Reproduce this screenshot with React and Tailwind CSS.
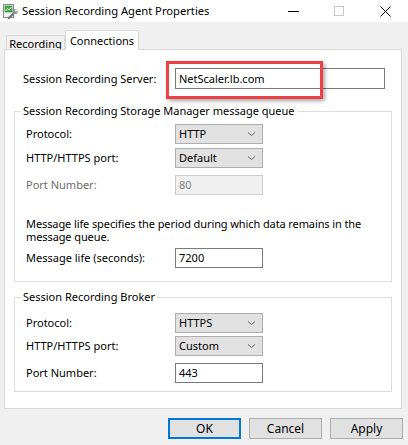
import React from "react";

const font = { fontFamily: '"Noto Sans", "Liberation Sans", sans-serif' };

function Chevron() {
  return (
    <svg width="9" height="6" viewBox="0 0 9 6" className="shrink-0">
      <path d="M1 1.5 L4.5 4.5 L8 1.5" fill="none" stroke="#606060" strokeWidth="1" />
    </svg>
  );
}

function Select({ value }) {
  return (
    <div className="flex h-[20px] w-[88px] items-center justify-between border border-[#adadad] bg-[#e1e1e1] pl-[3px] pr-[6px] text-black">
      <span>{value}</span>
      <Chevron />
    </div>
  );
}

function TextBox({ value, disabled }) {
  return (
    <div
      className={
        "flex h-[20px] w-[88px] items-center pl-[3px] " +
        (disabled
          ? "border border-[#cccccc] bg-[#f0f0f0] text-[#838383]"
          : "border border-[#7a7a7a] bg-white text-black")
      }
    >
      {value}
    </div>
  );
}

function Row({ label, children, dim }) {
  return (
    <div className="flex items-center">
      <span className={"w-[149px] shrink-0 " + (dim ? "text-[#6d6d6d]" : "text-black")}>{label}</span>
      {children}
    </div>
  );
}

function Button({ label, primary }) {
  return (
    <div
      className={
        "flex h-[21px] w-[73px] items-center justify-center bg-[#e1e1e1] text-[12px] text-black " +
        (primary ? "border-2 border-[#0078d7]" : "border border-[#adadad]")
      }
    >
      {label}
    </div>
  );
}

function AppIcon() {
  return (
    <svg width="16" height="16" viewBox="0 0 16 16">
      <rect x="1.5" y="1.5" width="10" height="13" fill="#f4f4f4" stroke="#8a8a8a" />
      <rect x="3" y="3" width="7" height="6" fill="#3fae49" stroke="#2a7d33" strokeWidth="0.6" />
      <path d="M3.5 8 L5.5 5.5 L7 7 L9.5 4" fill="none" stroke="#ffffff" strokeWidth="0.9" />
      <path d="M7 15 L13 9" stroke="#6f7780" strokeWidth="2.4" strokeLinecap="round" />
      <circle cx="13" cy="8.5" r="2.6" fill="#8c949c" />
      <circle cx="14" cy="7.5" r="1.1" fill="#f4f4f4" />
    </svg>
  );
}

export default function App() {
  return (
    <div className="relative h-[445px] w-[408px] overflow-hidden bg-[#f0f0f0] text-[11px] leading-[16px]" style={font}>
      {/* Title bar */}
      <div className="flex h-[22px] items-center bg-white">
        <div className="ml-[2px] flex h-[16px] w-[16px] items-center">
          <AppIcon />
        </div>
        <span className="ml-[4px] text-[11.2px] text-black">Session Recording Agent Properties</span>
        <div className="ml-auto flex items-center">
          <div className="flex h-[22px] w-[46px] items-center justify-center">
            <div className="h-px w-[11px] bg-black" />
          </div>
          <div className="flex h-[22px] w-[46px] items-center justify-center">
            <div className="h-[10px] w-[10px] border border-[#c8c8c8]" />
          </div>
          <div className="flex h-[22px] w-[46px] items-center justify-center">
            <svg width="11" height="11" viewBox="0 0 11 11">
              <path d="M0.5 0.5 L10.5 10.5 M10.5 0.5 L0.5 10.5" stroke="#000" strokeWidth="1" />
            </svg>
          </div>
        </div>
      </div>

      {/* Tabs */}
      <div className="flex h-[27px] items-end pl-[6px] pt-[8px]">
        <div className="mb-[-1px] flex h-[15px] w-[59px] items-center justify-center border border-b-0 border-[#d9d9d9] bg-[#f0f0f0] pt-[1px] leading-[13px] text-black">
          Recording
        </div>
        <div className="relative z-10 mb-[-1px] flex h-[20px] w-[74px] items-start justify-center border border-b-0 border-[#d9d9d9] bg-white pt-[2px] text-black">
          Connections
        </div>
      </div>

      {/* Tab page */}
      <div className="relative mx-[4px] h-[360px] w-[398px] border border-[#d9d9d9] bg-white">
        <div className="flex items-center pl-[18px] pt-[18px]">
          <span className="w-[152px] shrink-0 text-black">Session Recording Server:</span>
          <div className="flex h-[21px] w-[210px] items-center border border-[#7a7a7a] bg-white pl-[3px] text-black">
            NetScaler.lb.com
          </div>
        </div>

        <fieldset className="mx-[9px] mt-[14px] border border-[#dcdcdc] px-[6px] pb-[13px]">
          <legend className="px-[2px] text-black">Session Recording Storage Manager message queue</legend>
          <div className="flex flex-col pl-[5px] pt-[5px]">
            <Row label="Protocol:">
              <Select value="HTTP" />
            </Row>
            <div className="mt-[4px]">
              <Row label="HTTP/HTTPS port:">
                <Select value="Default" />
              </Row>
            </div>
            <div className="mt-[7px]">
              <Row label="Port Number:" dim>
                <TextBox value="80" disabled />
              </Row>
            </div>
            <p className="mt-[22px] w-[358px] tracking-[-0.1px] leading-[13px] text-black">
              Message life specifies the period during which data remains in the message queue.
            </p>
            <div className="mt-[5px]">
              <Row label="Message life (seconds):">
                <TextBox value="7200" />
              </Row>
            </div>
          </div>
        </fieldset>

        <fieldset className="mx-[9px] mt-[7px] border border-[#dcdcdc] px-[6px] pb-[8px]">
          <legend className="px-[2px] text-black">Session Recording Broker</legend>
          <div className="flex flex-col pl-[5px] pt-[8px]">
            <Row label="Protocol:">
              <Select value="HTTPS" />
            </Row>
            <div className="mt-[3px]">
              <Row label="HTTP/HTTPS port:">
                <Select value="Custom" />
              </Row>
            </div>
            <div className="mt-[7px]">
              <Row label="Port Number:">
                <TextBox value="443" />
              </Row>
            </div>
          </div>
        </fieldset>

        {/* highlight around the server field */}
        <div className="pointer-events-none absolute left-[161px] top-[11px] h-[38px] w-[157px] border-[3px] border-[#ee3f47] shadow-[2px_2px_4px_rgba(0,0,0,0.35)]" />
      </div>

      {/* Dialog buttons */}
      <div className="mt-[9px] flex justify-end gap-[8px] pr-[5px]">
        <Button label="OK" primary />
        <Button label="Cancel" />
        <Button label="Apply" />
      </div>
    </div>
  );
}
